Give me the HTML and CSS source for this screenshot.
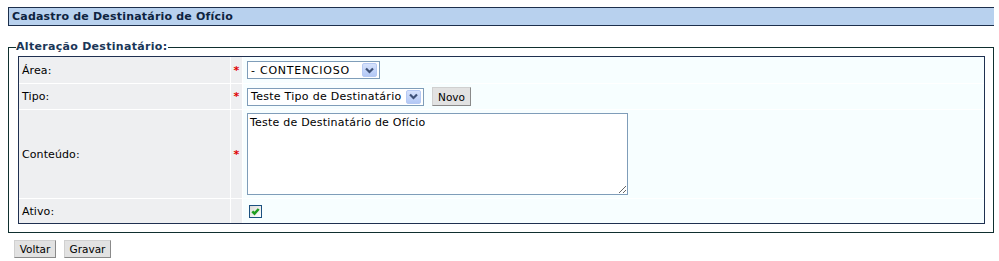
FILE: index.html
```html
<!DOCTYPE html>
<html lang="pt-BR">
<head>
    <meta charset="UTF-8">
    <title>Cadastro de Destinatário de Ofício</title>
    <link rel="stylesheet" href="styles.css">
</head>
<body>
    <div class="titulo">Cadastro de Destinatário de Ofício</div>

    <fieldset class="quadro">
        <legend>Alteração Destinatário:</legend>
        <table class="form-table">
            <tr class="row-area">
                <td class="rotulo">Área:</td>
                <td class="obrig">*</td>
                <td class="campo">
                    <div class="combo combo-area">
                        <span class="combo-text caps">- CONTENCIOSO</span>
                        <span class="combo-btn">
                            <svg width="9" height="7" viewBox="0 0 9 7"><path d="M1 1.5 L4.5 5 L8 1.5" fill="none" stroke="#3f5278" stroke-width="2.2"/></svg>
                        </span>
                    </div>
                </td>
            </tr>
            <tr class="row-tipo">
                <td class="rotulo">Tipo:</td>
                <td class="obrig">*</td>
                <td class="campo">
                    <div class="linha">
                        <div class="combo combo-tipo">
                            <span class="combo-text">Teste Tipo de Destinatário</span>
                            <span class="combo-btn">
                                <svg width="9" height="7" viewBox="0 0 9 7"><path d="M1 1.5 L4.5 5 L8 1.5" fill="none" stroke="#3f5278" stroke-width="2.2"/></svg>
                            </span>
                        </div>
                        <button class="botao botao-novo">Novo</button>
                    </div>
                </td>
            </tr>
            <tr class="row-conteudo">
                <td class="rotulo">Conteúdo:</td>
                <td class="obrig">*</td>
                <td class="campo">
                    <textarea class="texto">Teste de Destinatário de Ofício</textarea>
                </td>
            </tr>
            <tr class="row-ativo">
                <td class="rotulo">Ativo:</td>
                <td class="obrig"></td>
                <td class="campo">
                    <span class="check">
                        <svg width="11" height="11" viewBox="0 0 11 11"><path d="M2.3 5.3 L4.5 7.6 L8.7 3" fill="none" stroke="#1f9e1f" stroke-width="2.5"/></svg>
                    </span>
                </td>
            </tr>
        </table>
    </fieldset>

    <div class="acoes">
        <button class="botao botao-voltar">Voltar</button>
        <button class="botao botao-gravar">Gravar</button>
    </div>
</body>
</html>
```

FILE: styles.css
```css
body{
    font-family: "DejaVu Sans", Verdana, sans-serif;
    font-size: 11px;
    color: #000;
    margin: 7px 5px 0 8px;
    background: #fff;
}
.titulo{
    background-color: #b8d1ee;
    border: 1px solid #1c2f4c;
    color: #0d2340;
    font-weight: bold;
    letter-spacing: 0.2px;
    height: 17px;
    line-height: 17px;
    padding: 0 3px;
    width: 979px;
}
.quadro{
    margin: 14px 0 0 0;
    border: 1px solid #0f2f2f;
    padding: 2px 8px 8px 9px;
    width: 967px;
}
.quadro legend{
    color: #1a3657;
    font-weight: bold;
    letter-spacing: 0.3px;
    padding: 0 1px 0 0;
    margin-left: -2px;
    line-height: 14px;
}
.form-table{
    width: 100%;
    border: 1px solid #1f3050;
    border-collapse: separate;
    border-spacing: 0;
}
.form-table td{
    padding: 0;
    vertical-align: middle;
}
.form-table td + td{
    border-left: 1px solid #fff;
}
.form-table tr + tr td{
    border-top: 1px solid #fff;
}
.rotulo{
    background-color: #eeeff1;
    width: 208px;
    padding-left: 3px !important;
    letter-spacing: 0.1px;
}
.obrig{
    background-color: #eeeff1;
    color: #e00000;
    font-weight: bold;
    width: 11px;
    text-align: center;
}
.campo{
    background-color: #f7feff;
    padding-left: 4px !important;
}
.row-area td{ height: 26px; }
.row-tipo td{ height: 25px; }
.row-conteudo td{ height: 88px; }
.row-ativo td{ height: 24px; }

.linha{
    display: flex;
    align-items: center;
    gap: 8px;
}
.combo{
    display: flex;
    align-items: center;
    justify-content: space-between;
    box-sizing: border-box;
    height: 18px;
    border: 1px solid #7f9db9;
    background: #fff;
    padding: 0 2px 0 3px;
}
.combo-text{
    letter-spacing: 0.28px;
}
.combo-text.caps{
    letter-spacing: 0.75px;
}
.combo-area{ width: 133px; }
.combo-tipo{ width: 177px; }
.combo-btn{
    display: flex;
    align-items: center;
    justify-content: center;
    width: 15px;
    height: 14px;
    box-sizing: border-box;
    border: 1px solid #b6c9f3;
    border-radius: 2px;
    background: linear-gradient(#d6e2fc, #b3c8f5);
}
.texto{
    display: block;
    box-sizing: border-box;
    width: 381px;
    height: 82px;
    margin: 0;
    border: 1px solid #7f9db9;
    padding: 2px 2px;
    font-family: "DejaVu Sans", Verdana, sans-serif;
    font-size: 11px;
    letter-spacing: 0.22px;
    color: #000;
    resize: both;
}
.check{
    display: flex;
    align-items: center;
    justify-content: center;
    box-sizing: border-box;
    width: 13px;
    height: 13px;
    margin-left: 2px;
    border: 1px solid #1c5180;
    background: linear-gradient(135deg, #dcdcd7, #fff);
}
.botao{
    font-family: "DejaVu Sans", Verdana, sans-serif;
    font-size: 10.5px;
    color: #000;
    height: 18px;
    padding: 0;
    background: #e2e2e2;
    border: 1px solid;
    border-color: #d0d0d0 #8a8a8a #8a8a8a #d0d0d0;
    border-radius: 0;
    cursor: pointer;
}
.botao-novo{
    width: 39px;
    height: 19px;
}
.botao-voltar{ width: 42px; }
.botao-gravar{ width: 47px; }
.acoes{
    display: flex;
    gap: 8px;
    margin: 7px 0 0 6px;
}
```
